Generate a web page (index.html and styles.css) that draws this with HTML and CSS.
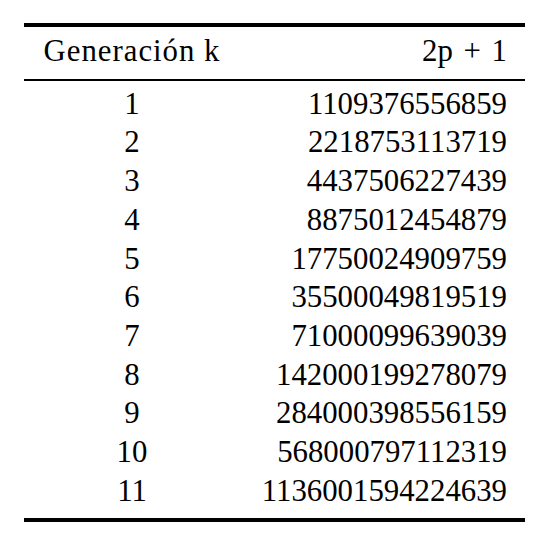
FILE: index.html
```html
<!DOCTYPE html>
<html lang="es">
    <head>
        <meta charset="utf-8">
        <title>Generaciones 2p + 1</title>
        <link rel="stylesheet" href="styles.css">
    </head>
    <body>
        <table class="Tabla">
            <thead>
                <tr>
                    <th class="ColK">Generación k</th>
                    <th class="ColP Formula">2p + 1</th>
                </tr>
            </thead>
            <tbody>
                <tr><td class="ColK">1</td><td class="ColP">1109376556859</td></tr>
                <tr><td class="ColK">2</td><td class="ColP">2218753113719</td></tr>
                <tr><td class="ColK">3</td><td class="ColP">4437506227439</td></tr>
                <tr><td class="ColK">4</td><td class="ColP">8875012454879</td></tr>
                <tr><td class="ColK">5</td><td class="ColP">17750024909759</td></tr>
                <tr><td class="ColK">6</td><td class="ColP">35500049819519</td></tr>
                <tr><td class="ColK">7</td><td class="ColP">71000099639039</td></tr>
                <tr><td class="ColK">8</td><td class="ColP">142000199278079</td></tr>
                <tr><td class="ColK">9</td><td class="ColP">284000398556159</td></tr>
                <tr><td class="ColK">10</td><td class="ColP">568000797112319</td></tr>
                <tr><td class="ColK">11</td><td class="ColP">1136001594224639</td></tr>
            </tbody>
        </table>
    </body>
</html>
```

FILE: styles.css
```css
body{
    margin: 0;
    background: white;
    color: black;
    font-family: "Liberation Serif", "Times New Roman", serif;
}

.Tabla{
    margin: 23px 0 0 24px;
    width: 501px;
    border-collapse: collapse;
    border-top: 4px solid black;
    border-bottom: 4px solid black;
    font-size: 30.8px;
}

.Tabla th{
    font-weight: normal;
    line-height: 38.7px;
    padding: 5px 18px 8px 18px;
    border-bottom: 2px solid black;
}

.Tabla th.ColK{
    letter-spacing: 1px;
}

.Tabla th.Formula{
    word-spacing: 3px;
}

.Tabla td{
    line-height: 38.7px;
    padding: 0 18px;
}

.Tabla tbody tr:first-child td{
    padding-top: 4px;
}

.Tabla tbody tr:last-child td{
    padding-bottom: 8px;
}

.ColK{
    width: 180px;
    text-align: center;
}

.ColP{
    text-align: right;
}
```
